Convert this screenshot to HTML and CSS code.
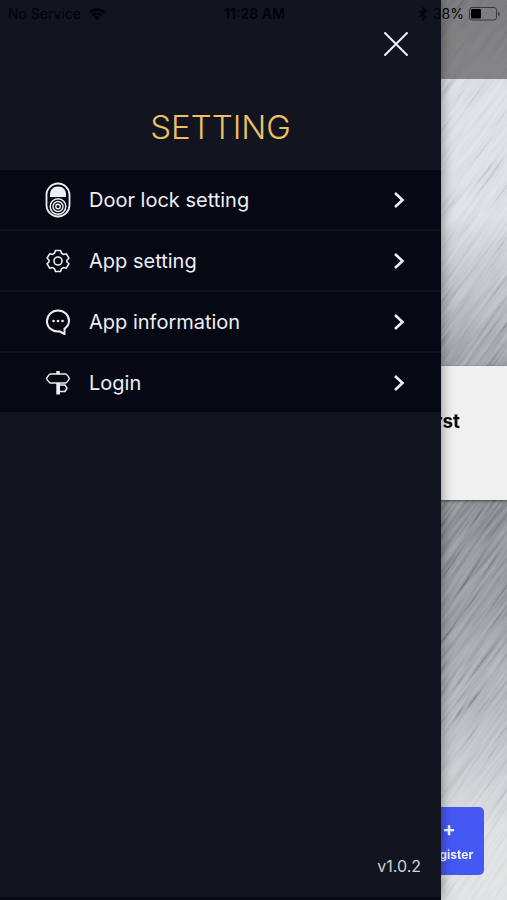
FILE: index.html
```
<!DOCTYPE html>
<html lang="en">
<head>
<meta charset="utf-8">
<meta name="viewport" content="width=device-width, initial-scale=1">
<title>Setting</title>
<link rel="stylesheet" href="styles.css">
</head>
<body>
<div class="screen">
  <main class="home">
    <svg class="metal" aria-hidden="true">
      <filter id="brushed" x="0" y="0" width="100%" height="100%">
        <feTurbulence type="fractalNoise" baseFrequency="0.018 0.32" numOctaves="2" seed="8"/>
        <feColorMatrix values="1.6 0 0 0 -0.35  1.6 0 0 0 -0.35  1.6 0 0 0 -0.34  0 0 0 0 1"/>
      </filter>
      <rect width="100%" height="100%" filter="url(#brushed)"/>
    </svg>
    <div class="home-bar"></div>
    <div class="home-view"></div>
    <section class="notice"><p>first</p></section>
    <div class="home-foot">
      <button class="register" type="button"><span class="plus">+</span><span>Register</span></button>
    </div>
  </main>

  <aside class="drawer">
    <header class="drawer-head">
      <button class="close" type="button" aria-label="Close">
        <svg viewBox="0 0 26 26"><path d="M2 2 24 24M24 2 2 24"/></svg>
      </button>
      <h1>SETTING</h1>
    </header>
    <nav class="menu">
      <a href="#lock">
        <svg class="icon" viewBox="0 0 26 36" aria-hidden="true">
          <rect x="1.500" y="1.500" width="23" height="33" rx="11.500" stroke-width="1.800"/>
          <path class="solid" d="M5 15V12.500C5 7.500 8 4.500 13 4.500S21 7.500 21 12.500V15Z"/>
          <circle cx="13" cy="24.500" r="7.800" stroke-width="1.500"/>
          <circle cx="13" cy="24.500" r="5" stroke-width="1.400"/>
          <circle cx="13" cy="24.500" r="2.200" stroke-width="1.400"/>
        </svg>
        <span>Door lock setting</span>
        <svg class="chevron" viewBox="0 0 12 18" aria-hidden="true"><path stroke-width="2.600" d="M2 2 9.500 9 2 16"/></svg>
      </a>
      <a href="#app">
        <svg class="icon" viewBox="0 0 26 26" aria-hidden="true">
          <path stroke-width="1.600" stroke-linejoin="round" d="M10.500 2.500h5l1 2.800q1.200.5 2 1.200l2.800-.7 2.600 4.400-2 2v1.600l2 2-2.600 4.400-2.800-.7q-.8.700-2 1.200l-1 2.800h-5l-1-2.800q-1.200-.5-2-1.200l-2.800.7L2.100 15.800l2-2v-1.600l-2-2L4.700 5.800l2.800.7q.8-.7 2-1.200z"/>
          <circle cx="13" cy="13" r="4" stroke-width="1.600"/>
        </svg>
        <span>App setting</span>
        <svg class="chevron" viewBox="0 0 12 18" aria-hidden="true"><path stroke-width="2.600" d="M2 2 9.500 9 2 16"/></svg>
      </a>
      <a href="#info">
        <svg class="icon" viewBox="0 0 26 26" aria-hidden="true">
          <path stroke-width="2" d="M19.500 25 14.500 22.300C7 23 2 18.500 2 12.300 2 6.200 6.800 1.500 13 1.500S24 6.200 24 12c0 3-1.800 5.700-4.500 7.800z"/>
          <g class="solid"><circle cx="8.500" cy="12" r="1.300"/><circle cx="13" cy="12" r="1.300"/><circle cx="17.500" cy="12" r="1.300"/></g>
        </svg>
        <span>App information</span>
        <svg class="chevron" viewBox="0 0 12 18" aria-hidden="true"><path stroke-width="2.600" d="M2 2 9.500 9 2 16"/></svg>
      </a>
      <a href="#login">
        <svg class="icon" viewBox="0 0 26 26" aria-hidden="true">
          <path stroke-width="1.500" stroke-linejoin="round" d="M5 4h16q1.500 1 3.500 4.500Q22.500 12 21 13H5Q3.500 12 1.500 8.500 3.500 5 5 4zM14 15h6l2 3.200-2 3.300h-6"/>
          <path class="solid" d="M11.300 1h3.400v3h-3.400zM11.300 13h3.700v11.500h-3.700z"/>
        </svg>
        <span>Login</span>
        <svg class="chevron" viewBox="0 0 12 18" aria-hidden="true"><path stroke-width="2.600" d="M2 2 9.500 9 2 16"/></svg>
      </a>
    </nav>
    <p class="version">v1.0.2</p>
  </aside>

  <div class="status">
    <div class="status-left"><span>No Service</span>
      <svg class="wifi" viewBox="0 0 18 13" aria-hidden="true"><path stroke-width="2.400" d="M1.500 4.500Q9-1.500 16.500 4.500M4.300 7.300Q9 3.500 13.700 7.300"/><path class="dot" d="M6.200 9Q9 7 11.800 9L9 12.500Z"/></svg>
    </div>
    <strong>11:28 AM</strong>
    <div class="status-right">
      <svg class="bluetooth" viewBox="0 0 10 14" aria-hidden="true"><path stroke-width="1.300" d="M1.500 4 8 10 5 13V1L8 4 1.500 10"/></svg>
      <span>38%</span>
      <svg class="battery" viewBox="0 0 32 14" aria-hidden="true"><rect class="case" x=".5" y=".5" width="27" height="12.500" rx="2.500"/><rect x="2" y="2" width="10" height="9.500" rx="1"/><path d="M29.500 4.500q2 2.300 0 4.600z"/></svg>
    </div>
  </div>
</div>
</body>
</html>
```
FILE: styles.css
```
* { box-sizing: border-box; }

body {
  margin: 0;
  font-family: Inter, "Liberation Sans", sans-serif;
  color: #0b0b0e;
}

h1, p { margin: 0; }

button {
  border: 0;
  padding: 0;
  font: inherit;
  color: inherit;
  background: none;
}

.screen {
  position: relative;
  min-height: 100vh;
  overflow: hidden;
  display: grid;
}

/* Home screen behind the drawer */
.home {
  position: relative;
  isolation: isolate;
  display: grid;
  grid-template-rows: 79px 287px auto 1fr;
  overflow: hidden;
  background: linear-gradient(#c4c5c8 0, #dcdde1 10%, #dadbe0 24%, #9a9ba3 40%, #85888d 57%, #97999e 70%, #bfc1c5 84%, #dadbdd 92%, #dedfe1 100%);
}

.metal {
  position: absolute;
  z-index: -1;
  top: -30%;
  left: -70%;
  width: 240%;
  height: 160%;
  transform: rotate(-54deg);
  mix-blend-mode: soft-light;
  opacity: 0.6;
}

.home-bar { background: rgb(60 60 62 / 55%); }

.notice {
  padding: 44px 47px 66px;
  background: #f0f0f0;
  box-shadow: 0 1px 3px rgb(0 0 0 / 55%);
  font-size: 19px;
  line-height: 24px;
  font-weight: 700;
  text-align: right;
}

.home-foot {
  display: flex;
  justify-content: flex-end;
  align-items: flex-end;
  padding: 0 23px 25px;
}

.register {
  display: grid;
  justify-items: center;
  align-content: center;
  gap: 8px;
  width: 70px;
  height: 68px;
  border-radius: 5px;
  background: #4459f3;
  color: #f4f5ff;
  font-size: 12px;
  line-height: 16px;
  font-weight: 700;
}

.plus { font-size: 20px; line-height: 20px; }

/* Drawer */
.drawer {
  position: absolute;
  inset: 0 13% 0 0;
  display: flex;
  flex-direction: column;
  background: #12141f;
  border-bottom: 3px solid #090914;
  box-shadow: 0 0 12px rgb(0 0 0 / 45%);
  color: #eeeff4;
}

.drawer-head {
  display: flex;
  flex-direction: column;
  padding: 31px 32px 22px;
  gap: 50px;
}

.close {
  align-self: flex-end;
  width: 26px;
  height: 26px;
}

.close svg { display: block; }

.drawer svg {
  fill: none;
  stroke: currentColor;
}

.close path { stroke-width: 2; stroke-linecap: round; }

h1 {
  font-size: 33px;
  line-height: 40px;
  font-weight: 350;
  text-align: center;
  color: #ebc166;
}

.menu a {
  display: grid;
  grid-template-columns: 26px 1fr 12px;
  column-gap: 18px;
  align-items: center;
  height: 61px;
  padding: 0 36px 0 45px;
  border-bottom: 2px solid #10121c;
  background: #060914;
  color: inherit;
  text-decoration: none;
  font-size: 20px;
  line-height: 24px;
}

.icon { width: 26px; }

.drawer .solid { fill: currentColor; stroke: none; }

.chevron { width: 12px; height: 18px; }

.version {
  margin-top: auto;
  padding: 0 20px 20px;
  font-size: 16px;
  line-height: 22px;
  text-align: right;
  color: #d2d3d9;
}

.drawer-head + .menu { padding-top: 1px; }

/* Phone status bar */
.status {
  position: absolute;
  inset: 0 0 auto;
  display: grid;
  grid-template-columns: 1fr auto 1fr;
  align-items: center;
  height: 28px;
  padding: 0 6px 0 8px;
  font-size: 14px;
  line-height: 18px;
  color: #020308;
}

.status strong { font-weight: 600; }

.status-left, .status-right { display: flex; align-items: center; gap: 7px; }

.status-right { justify-content: flex-end; gap: 5px; }

.wifi { width: 18px; height: 13px; }

.wifi path, .bluetooth path { fill: none; stroke: currentColor; }

.wifi .dot { fill: currentColor; stroke: none; }

.bluetooth { width: 10px; height: 14px; }

.battery { width: 32px; height: 14px; }

.battery .case { fill: none; stroke: #39393b; }
```
